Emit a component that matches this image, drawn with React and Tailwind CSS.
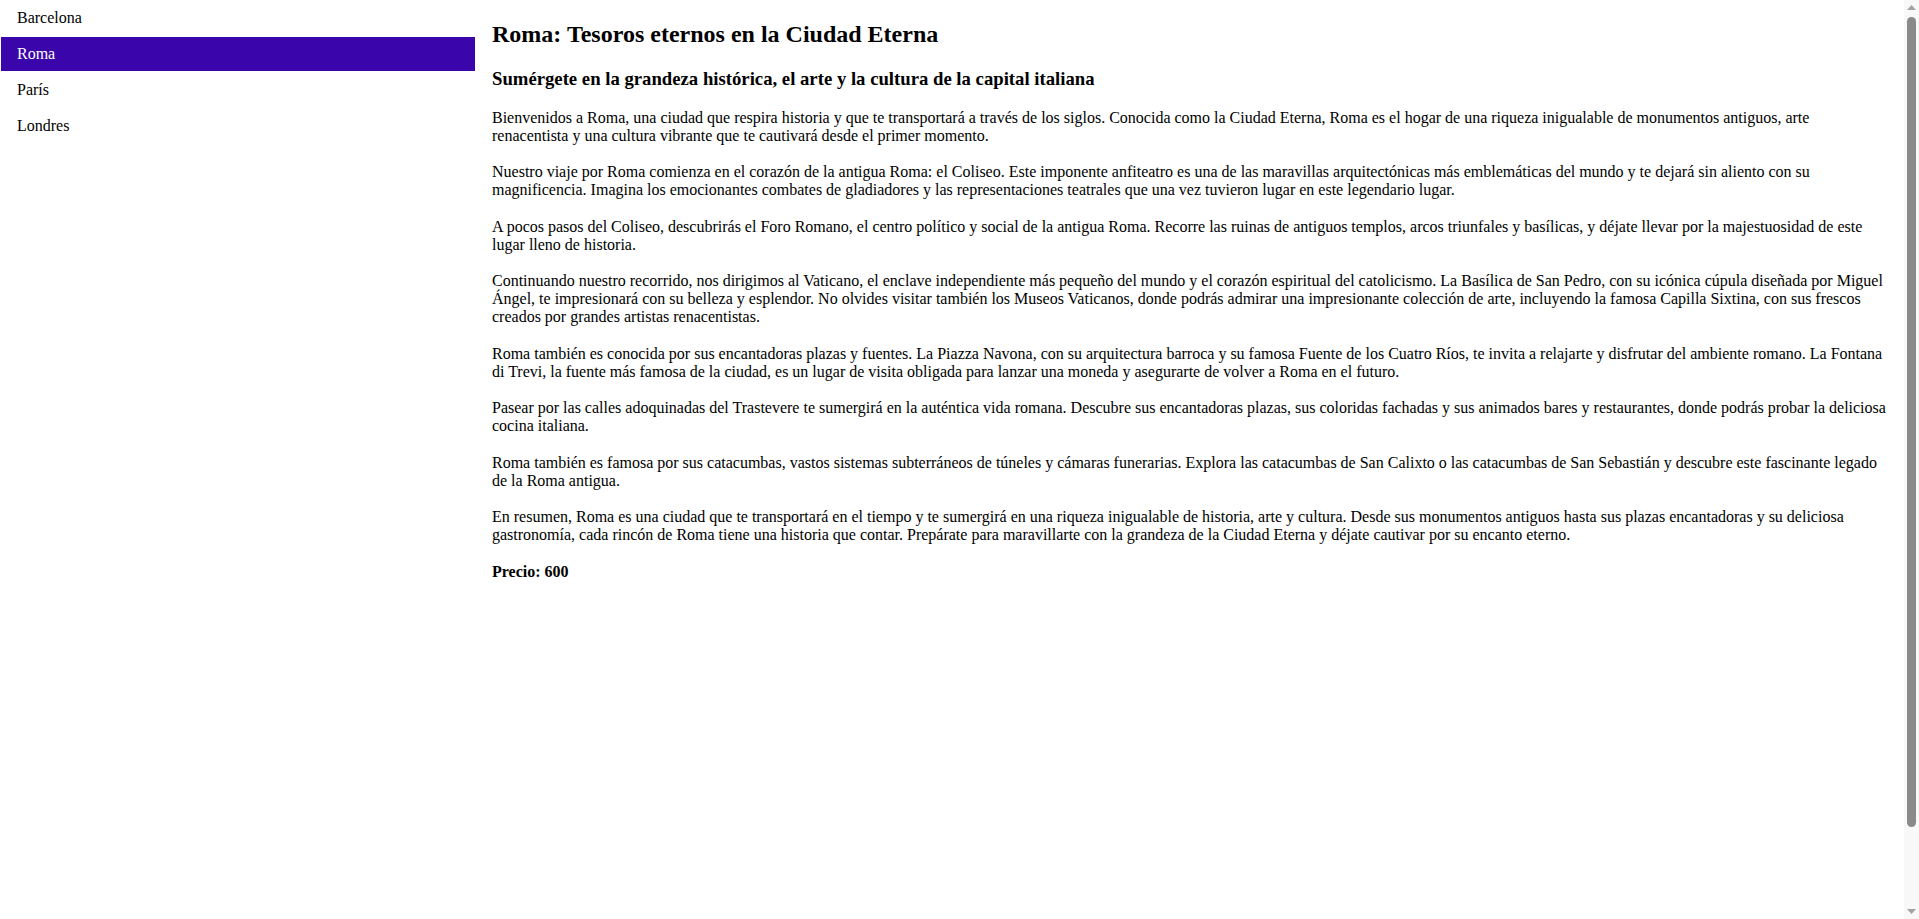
import { useState } from 'react';

const CITIES = ['Barcelona', 'Roma', 'París', 'Londres'];

const PARAGRAPHS = [
  'Bienvenidos a Roma, una ciudad que respira historia y que te transportará a través de los siglos. Conocida como la Ciudad Eterna, Roma es el hogar de una riqueza inigualable de monumentos antiguos, arte renacentista y una cultura vibrante que te cautivará desde el primer momento.',
  'Nuestro viaje por Roma comienza en el corazón de la antigua Roma: el Coliseo. Este imponente anfiteatro es una de las maravillas arquitectónicas más emblemáticas del mundo y te dejará sin aliento con su magnificencia. Imagina los emocionantes combates de gladiadores y las representaciones teatrales que una vez tuvieron lugar en este legendario lugar.',
  'A pocos pasos del Coliseo, descubrirás el Foro Romano, el centro político y social de la antigua Roma. Recorre las ruinas de antiguos templos, arcos triunfales y basílicas, y déjate llevar por la majestuosidad de este lugar lleno de historia.',
  'Continuando nuestro recorrido, nos dirigimos al Vaticano, el enclave independiente más pequeño del mundo y el corazón espiritual del catolicismo. La Basílica de San Pedro, con su icónica cúpula diseñada por Miguel Ángel, te impresionará con su belleza y esplendor. No olvides visitar también los Museos Vaticanos, donde podrás admirar una impresionante colección de arte, incluyendo la famosa Capilla Sixtina, con sus frescos creados por grandes artistas renacentistas.',
  'Roma también es conocida por sus encantadoras plazas y fuentes. La Piazza Navona, con su arquitectura barroca y su famosa Fuente de los Cuatro Ríos, te invita a relajarte y disfrutar del ambiente romano. La Fontana di Trevi, la fuente más famosa de la ciudad, es un lugar de visita obligada para lanzar una moneda y asegurarte de volver a Roma en el futuro.',
  'Pasear por las calles adoquinadas del Trastevere te sumergirá en la auténtica vida romana. Descubre sus encantadoras plazas, sus coloridas fachadas y sus animados bares y restaurantes, donde podrás probar la deliciosa cocina italiana.',
  'Roma también es famosa por sus catacumbas, vastos sistemas subterráneos de túneles y cámaras funerarias. Explora las catacumbas de San Calixto o las catacumbas de San Sebastián y descubre este fascinante legado de la Roma antigua.',
  'En resumen, Roma es una ciudad que te transportará en el tiempo y te sumergirá en una riqueza inigualable de historia, arte y cultura. Desde sus monumentos antiguos hasta sus plazas encantadoras y su deliciosa gastronomía, cada rincón de Roma tiene una historia que contar. Prepárate para maravillarte con la grandeza de la Ciudad Eterna y déjate cautivar por su encanto eterno.'
];

// classic page scrollbar seen at the right edge of the screenshot
const Scrollbar = () => (
  <div className="w-[15px] shrink-0 h-screen bg-[#f8f8f8] flex flex-col items-center">
    <div className="h-[15px] w-full flex items-center justify-center">
      <svg width="9" height="5" viewBox="0 0 9 5"><polygon points="4.5,0 9,5 0,5" fill="#a3a3a3" /></svg>
    </div>
    <div className="flex-1 w-full flex flex-col items-center">
      <div className="mt-[2px] w-[9px] h-[810px] rounded-full bg-[#8a8a8a]" />
    </div>
    <div className="h-[15px] w-full flex items-center justify-center">
      <svg width="9" height="5" viewBox="0 0 9 5"><polygon points="0,0 9,0 4.5,5" fill="#a3a3a3" /></svg>
    </div>
  </div>
);

const App = () => {
  const [active, setActive] = useState('Roma');

  return (
    <div className="flex h-screen overflow-hidden bg-white text-black font-['Liberation_Serif','Times_New_Roman',serif] text-base leading-[normal]">
      <div className="flex flex-1 min-w-0">
        {/* Sidebar */}
        <nav className="w-1/4 shrink-0 flex flex-col">
          {CITIES.map((city) => (
            <a
              key={city}
              href="#"
              onClick={(e) => { e.preventDefault(); setActive(city); }}
              className={`m-px px-4 py-2 block ${active === city ? 'bg-[#3a05aa] text-white' : 'text-black'}`}
            >
              {city}
            </a>
          ))}
        </nav>

        {/* Content */}
        <main className="flex-1 min-w-0 px-4 pt-px">
          <h1 className="text-[24px] font-bold my-[19.92px]">Roma: Tesoros eternos en la Ciudad Eterna</h1>
          <h3 className="text-[18.72px] font-bold my-[18.72px]">Sumérgete en la grandeza histórica, el arte y la cultura de la capital italiana</h3>
          {PARAGRAPHS.map((p, i) => (
            <p key={i} className="my-[18.5px]">{p}</p>
          ))}
          <p className="font-bold my-[18.5px]">Precio: 600</p>
        </main>
      </div>
      <Scrollbar />
    </div>
  );
};

export default App;
